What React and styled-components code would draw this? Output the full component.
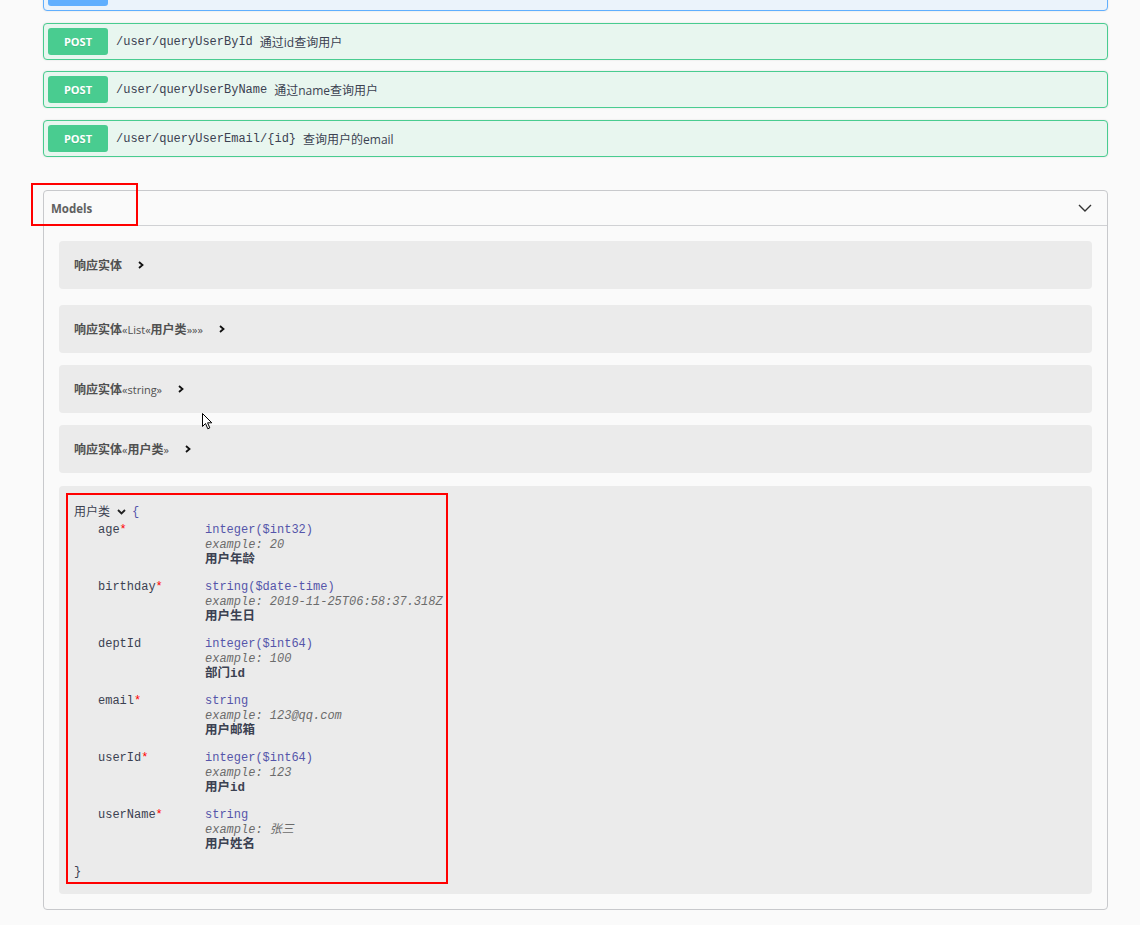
import React from 'react';
import styled, { createGlobalStyle } from 'styled-components';

const Global = createGlobalStyle`
  html, body { margin: 0; padding: 0; background: #fafafa; }
  body {
    font-family: "Open Sans", "Noto Sans CJK SC", sans-serif;
    color: #3b4151;
  }
  * { box-sizing: border-box; }
`;

const MONO = `"Liberation Mono", "Noto Sans CJK SC", monospace`;
const CJK = `"Open Sans", "Noto Sans CJK SC", sans-serif`;

const Page = styled.div`
  position: relative;
  display: flow-root;
  width: 1065px;
  margin-left: 43px;
  padding-bottom: 15px;
`;

const OpList = styled.div`
  display: flex;
  flex-direction: column;
  margin-top: -26px;
`;

const OpBlock = styled.div`
  height: 37px;
  display: flex;
  align-items: center;
  padding: 0 4px;
  margin-bottom: ${(p) => p.$mb || 0}px;
  border: 1px solid ${(p) => p.$main};
  border-radius: 4px;
  background: ${(p) => p.$bg};
  box-shadow: 0 0 2px rgba(0, 0, 0, 0.12);
`;

const MethodBadge = styled.span`
  width: 60px;
  height: 27px;
  border-radius: 3px;
  background: ${(p) => p.$main};
  color: #fff;
  font-family: "Open Sans", sans-serif;
  font-weight: 700;
  font-size: 11px;
  display: flex;
  align-items: center;
  justify-content: center;
  text-shadow: 0 1px 0 rgba(0, 0, 0, 0.1);
  flex: none;
`;

const OpPath = styled.span`
  margin-left: 8px;
  font-family: ${MONO};
  font-size: 12px;
  color: #3b4151;
`;

const OpDesc = styled.span`
  margin-left: 7px;
  font-family: ${CJK};
  font-size: 12px;
  color: #3b4151;
`;

const Section = styled.section`
  position: relative;
  margin-top: 33px;
  border: 1px solid #c8c9cc;
  border-radius: 4px;
`;

const SectionHeader = styled.div`
  height: 35px;
  display: flex;
  align-items: center;
  justify-content: space-between;
  padding: 0 15px 0 7px;
  border-bottom: 1px solid #d0d1d4;
`;

const SectionTitle = styled.h4`
  margin: 0;
  font-family: "Open Sans", sans-serif;
  font-size: 11.5px;
  font-weight: 700;
  color: #606060;
`;

const Annotation = styled.div`
  position: absolute;
  border: 2px solid #ff0000;
  pointer-events: none;
  left: ${(p) => p.$x}px;
  top: ${(p) => p.$y}px;
  width: ${(p) => p.$w}px;
  height: ${(p) => p.$h}px;
`;

const SectionBody = styled.div`
  padding: 15px 15px 15px;
  display: flex;
  flex-direction: column;
`;

const ModelRow = styled.div`
  height: 48px;
  background: #ebebeb;
  border-radius: 4px;
  display: flex;
  align-items: center;
  padding-left: 15px;
  margin-bottom: ${(p) => p.$gap}px;
`;

const ModelTitle = styled.span`
  font-family: ${CJK};
  font-size: 12px;
  font-weight: 700;
  color: #505050;
`;

const Latin = styled.span`
  font-family: "Open Sans", sans-serif;
  font-size: 11px;
  font-weight: 400;
`;

const ChevronRight = styled.svg`
  margin-left: 16px;
  width: 6px;
  height: 8px;
`;

const ModelOpen = styled.div`
  background: #ebebeb;
  border-radius: 4px;
  padding: 7px 7px 10px;
`;

const ModelBox = styled.div`
  display: inline-block;
  border: 2px solid #ff0000;
  padding: 8px 3px 2px 6px;
  font-family: ${MONO};
  font-size: 12px;
  color: #3b4151;
`;

const BoxTitle = styled.div`
  height: 18px;
  line-height: 18px;
  display: flex;
  align-items: center;
  margin-bottom: 2px;
`;

const BoxName = styled.span`
  font-family: ${CJK};
  font-size: 12px;
  color: #3b4151;
`;

const ChevronDown = styled.svg`
  width: 9px;
  height: 6px;
  margin: 0 6px 0 7px;
`;

const Brace = styled.span`
  color: #55a;
  font-family: ${MONO};
`;

const PropGrid = styled.div`
  display: grid;
  grid-template-columns: 107px auto;
  row-gap: 12px;
  margin-left: 24px;
  line-height: 15px;
`;

const PropName = styled.div`
  color: #3b4151;
  white-space: nowrap;
`;

const Star = styled.span`
  color: #f00;
`;

const PropInfo = styled.div`
  display: flex;
  flex-direction: column;
  white-space: nowrap;
`;

const PropType = styled.span`
  color: #55a;
`;

const PropExample = styled.span`
  color: #6b6b6b;
  font-style: italic;
`;

const PropDesc = styled.span`
  font-weight: 700;
  font-size: 12.5px;
  color: #3b4151;
`;

const CloseBrace = styled.div`
  margin-top: 12px;
  line-height: 15px;
  color: #3b4151;
`;

const Cursor = styled.svg`
  position: absolute;
  left: 159px;
  top: 413px;
  width: 11px;
  height: 17px;
  pointer-events: none;
`;

const ops = [
  { path: '/user/queryUserById', desc: '通过id查询用户', mb: 11 },
  { path: '/user/queryUserByName', desc: '通过name查询用户', mb: 12 },
  { path: '/user/queryUserEmail/{id}', desc: '查询用户的email', mb: 0 },
];

const models = [
  { title: <>响应实体</>, gap: 16 },
  { title: <>响应实体<Latin>«List«</Latin>用户类<Latin>»»»</Latin></>, gap: 12 },
  { title: <>响应实体<Latin>«string»</Latin></>, gap: 12 },
  { title: <>响应实体<Latin>«</Latin>用户类<Latin>»</Latin></>, gap: 13 },
];

const props = [
  { name: 'age', req: true, type: 'integer($int32)', ex: '20', desc: '用户年龄' },
  { name: 'birthday', req: true, type: 'string($date-time)', ex: '2019-11-25T06:58:37.318Z', desc: '用户生日' },
  { name: 'deptId', req: false, type: 'integer($int64)', ex: '100', desc: '部门id' },
  { name: 'email', req: true, type: 'string', ex: '123@qq.com', desc: '用户邮箱' },
  { name: 'userId', req: true, type: 'integer($int64)', ex: '123', desc: '用户id' },
  { name: 'userName', req: true, type: 'string', ex: '张三', desc: '用户姓名' },
];

const GREEN = { main: '#49cc90', bg: '#e8f6ef' };
const BLUE = { main: '#61affe', bg: '#ebf3fb' };

export default function App() {
  return (
    <>
      <Global />
      <Page>
        <OpList>
          <OpBlock $main={BLUE.main} $bg={BLUE.bg} $mb={12}>
            <MethodBadge $main={BLUE.main} />
          </OpBlock>
          {ops.map((o) => (
            <OpBlock key={o.path} $main={GREEN.main} $bg={GREEN.bg} $mb={o.mb}>
              <MethodBadge $main={GREEN.main}>POST</MethodBadge>
              <OpPath>{o.path}</OpPath>
              <OpDesc>{o.desc}</OpDesc>
            </OpBlock>
          ))}
        </OpList>

        <Section>
          <Annotation $x={-13} $y={-8} $w={107} $h={43} />
          <SectionHeader>
            <SectionTitle>Models</SectionTitle>
            <svg width="14" height="8" viewBox="0 0 14 8">
              <path d="M1 1 L7 7 L13 1" fill="none" stroke="#333" strokeWidth="1.4" />
            </svg>
          </SectionHeader>
          <SectionBody>
            {models.map((m, i) => (
              <ModelRow key={i} $gap={m.gap}>
                <ModelTitle>{m.title}</ModelTitle>
                <ChevronRight viewBox="0 0 6 8">
                  <path d="M1 1 L4.5 4 L1 7" fill="none" stroke="#111" strokeWidth="1.8" />
                </ChevronRight>
              </ModelRow>
            ))}
            <ModelOpen>
              <ModelBox>
                <BoxTitle>
                  <BoxName>用户类</BoxName>
                  <ChevronDown viewBox="0 0 9 6">
                    <path d="M1 1 L4.5 4.5 L8 1" fill="none" stroke="#222" strokeWidth="1.8" />
                  </ChevronDown>
                  <Brace>{'{'}</Brace>
                </BoxTitle>
                <PropGrid>
                  {props.map((p) => (
                    <React.Fragment key={p.name}>
                      <PropName>
                        {p.name}
                        {p.req && <Star>*</Star>}
                      </PropName>
                      <PropInfo>
                        <PropType>{p.type}</PropType>
                        <PropExample>example: {p.ex}</PropExample>
                        <PropDesc>{p.desc}</PropDesc>
                      </PropInfo>
                    </React.Fragment>
                  ))}
                </PropGrid>
                <CloseBrace>{'}'}</CloseBrace>
              </ModelBox>
            </ModelOpen>
          </SectionBody>
        </Section>

        <Cursor viewBox="0 0 11 17">
          <path d="M0.5 0.5 L0.5 13.5 L3.5 10.5 L5.8 15.8 L7.8 14.9 L5.6 9.8 L9.8 9.8 Z" fill="#fff" stroke="#000" strokeWidth="1" />
        </Cursor>
      </Page>
    </>
  );
}
